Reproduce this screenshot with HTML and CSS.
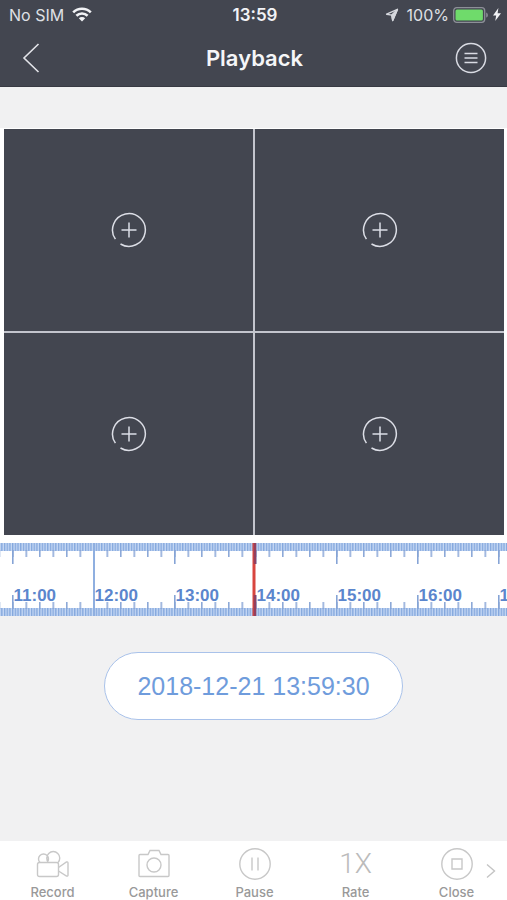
FILE: index.html
```html
<!DOCTYPE html>
<html lang="en">
<head>
  <meta charset="UTF-8">
  <meta name="viewport" content="width=device-width, initial-scale=1.0">
  <title>Playback</title>
  <link rel="stylesheet" href="styles.css">
</head>
<body>
  <header class="header">
    <div class="status-bar">
      <div class="status-left">
        <span>No SIM</span>
        <svg width="20" height="15" viewBox="0 0 20 15" fill="none" stroke="#f2f3f6" stroke-width="2.6">
          <path d="M1.2 5.4a12.6 12.6 0 0 1 17.6 0"/>
          <path d="M4.4 8.8a8 8 0 0 1 11.2 0"/>
          <path d="M6.8 11.2a4.6 4.6 0 0 1 6.4 0L10 14.4z" fill="#f2f3f6" stroke="none"/>
        </svg>
      </div>
      <span class="clock">13:59</span>
      <div class="status-right">
        <svg width="14" height="14" viewBox="0 0 14 14" fill="none" stroke="#d5d7dd" stroke-width="1.4" stroke-linejoin="round">
          <path d="M12.4 1.4L1.6 6.2l5.2.9.9 5.4z"/>
          <path d="M12.4 1.4L6.8 7.1l.9 5.4z" fill="#d5d7dd"/>
        </svg>
        <span>100%</span>
        <svg width="36" height="16" viewBox="0 0 36 16">
          <rect x=".7" y=".7" width="31" height="14.6" rx="3" fill="none" stroke="#8d9098" stroke-width="1.3"/>
          <rect x="2.5" y="2.5" width="27.4" height="11" rx="1.5" fill="#6fdb6b"/>
          <path d="M33.2 5.4c2.2.7 2.2 4.5 0 5.2z" fill="#8d9098"/>
        </svg>
        <svg width="8" height="13" viewBox="0 0 8 13"><path d="M5.4 0L0 7.4h3.2L2.2 13 8 5.2H4.6z" fill="#f2f3f6"/></svg>
      </div>
    </div>
    <div class="nav-bar">
      <button class="nav-button" aria-label="Back">
        <svg width="18" height="30" viewBox="0 0 18 30" fill="none" stroke="#e3e4e9" stroke-width="1.6"><path d="M16.5 1L2 15l14.5 14"/></svg>
      </button>
      <h1>Playback</h1>
      <button class="nav-button" aria-label="Menu">
        <svg width="32" height="32" viewBox="0 0 32 32" fill="none" stroke="#d9dbe3" stroke-width="1.5">
          <circle cx="16" cy="16" r="14.6"/>
          <path d="M9.5 11.5h13M9.5 16h13M9.5 20.5h13"/>
        </svg>
      </button>
    </div>
  </header>

  <main class="content">
    <section class="player">
      <div class="video-grid">
        <button class="video-cell" aria-label="Add camera 1"><svg class="add-icon" viewBox="-18 -18 36 36"><path d="M-8.5 14A16.4 16.4 0 1 0-13.6 9.2M-7.5 0h15M0-7.5v15"/></svg></button>
        <button class="video-cell" aria-label="Add camera 2"><svg class="add-icon" viewBox="-18 -18 36 36"><path d="M-8.5 14A16.4 16.4 0 1 0-13.6 9.2M-7.5 0h15M0-7.5v15"/></svg></button>
        <button class="video-cell" aria-label="Add camera 3"><svg class="add-icon" viewBox="-18 -18 36 36"><path d="M-8.5 14A16.4 16.4 0 1 0-13.6 9.2M-7.5 0h15M0-7.5v15"/></svg></button>
        <button class="video-cell" aria-label="Add camera 4"><svg class="add-icon" viewBox="-18 -18 36 36"><path d="M-8.5 14A16.4 16.4 0 1 0-13.6 9.2M-7.5 0h15M0-7.5v15"/></svg></button>
      </div>
      <!-- one hour is 81 units wide, x = 0 is the current time -->
      <svg class="timeline">
        <defs>
          <pattern id="minutes" x="1.5" width="2.7" height="73" patternUnits="userSpaceOnUse">
            <path d="M.7 0v8M.7 65v8" stroke="#7fa4dc" stroke-width="1.3"/>
          </pattern>
          <pattern id="tens" x="1.5" width="13.5" height="73" patternUnits="userSpaceOnUse">
            <path d="M.8 7v7M.8 59v7" stroke="#86a4d6" stroke-width="1.5"/>
          </pattern>
          <pattern id="hours" x="1.5" width="81" height="73" patternUnits="userSpaceOnUse">
            <path d="M.8 7v14M.8 52v14" stroke="#86a4d6" stroke-width="1.6"/>
          </pattern>
        </defs>
        <svg x="50%" overflow="visible">
          <rect class="band" x="-1000" y="0" width="2000" height="8"/>
          <rect class="band" x="-1000" y="65" width="2000" height="8"/>
          <rect x="-1000" width="2000" height="73" fill="url(#minutes)"/>
          <rect x="-1000" width="2000" height="73" fill="url(#tens)"/>
          <rect x="-1000" width="2000" height="73" fill="url(#hours)"/>
          <path d="M-159.5 0v73" stroke="#8fafe0" stroke-width="2"/>
          <g class="hour-labels">
            <text x="-240" y="58">11:00</text>
            <text x="-159" y="58">12:00</text>
            <text x="-78" y="58">13:00</text>
            <text x="3" y="58">14:00</text>
            <text x="84" y="58">15:00</text>
            <text x="165" y="58">16:00</text>
            <text x="246" y="58">17:00</text>
          </g>
          <path d="M.5 0v73" stroke="#d8453f" stroke-width="3"/>
          <path d="M1.5 0v21M1.5 52v21" stroke="#93405f" stroke-width="2.5"/>
        </svg>
      </svg>
    </section>
    <button class="date-button">2018-12-21 13:59:30</button>
  </main>

  <footer class="toolbar">
    <button class="tool">
      <svg class="tool-icon" viewBox="0 0 34 34">
        <path d="M3.500 15.500h17q2 0 2 2v10q0 2-2 2h-17q-2 0-2-2v-10q0-2 2-2z"/>
        <path d="M22.500 20.500l8-5.500q1.500-.5 1.500 1v12q0 1.500-1.500 1l-8-5"/>
        <path d="M4 15.500a5 5 0 1 1 7 0M12.500 15.500a6.500 6.500 0 1 1 9.500 0"/>
      </svg>
      Record
    </button>
    <button class="tool">
      <svg class="tool-icon" viewBox="0 0 34 34">
        <path d="M3 7.500h8l2-4h9l2 4h7q1 0 1 1v20q0 1-1 1H3q-1 0-1-1v-20q0-1 1-1z"/>
        <circle cx="17" cy="18" r="7"/>
      </svg>
      Capture
    </button>
    <button class="tool">
      <svg class="tool-icon" viewBox="0 0 34 34"><circle cx="17" cy="17" r="15.200"/><path d="M14 10.500v13M20 10.500v13"/></svg>
      Pause
    </button>
    <button class="tool">
      <span class="rate-value">1X</span>
      Rate
    </button>
    <button class="tool">
      <svg class="tool-icon" viewBox="0 0 34 34"><circle cx="17" cy="17" r="15.200"/><path d="M12 12h10v10H12z"/></svg>
      Close
    </button>
    <button class="more" aria-label="More tools">
      <svg width="10" height="16" viewBox="0 0 10 16" fill="none" stroke="#c4c4c4" stroke-width="1.4"><path d="M1 1.500L8.500 8 1 14.500"/></svg>
    </button>
  </footer>
</body>
</html>
```

FILE: styles.css
```css
* {
  box-sizing: border-box;
}
body {
  display: flex;
  flex-direction: column;
  min-height: 100vh;
  margin: 0;
  background-color: #f1f1f2;
  font-family: Inter, "Liberation Sans", sans-serif;
}
button {
  padding: 0;
  border: none;
  background: none;
  font-family: inherit;
  cursor: pointer;
}
svg {
  display: block;
}
.header {
  background-color: #434650;
  color: #f5f6f8;
  border-bottom: 1px solid #383a43;
}
.status-bar {
  display: grid;
  grid-template-columns: 1fr auto 1fr;
  align-items: center;
  height: 29px;
  padding: 0 6px 0 9px;
  font-size: 16px;
  color: #dfe0e5;
}
.status-left, .status-right {
  display: flex;
  align-items: center;
  gap: 8px;
}
.status-right {
  justify-content: flex-end;
  gap: 4px;
}
.status-right span {
  margin-left: 4px;
}
.clock {
  font-size: 17px;
  font-weight: 600;
  color: #f2f3f6;
}
.nav-bar {
  display: flex;
  align-items: center;
  justify-content: space-between;
  height: 57px;
  padding: 0 20px 0 22px;
}
.nav-button {
  display: flex;
  width: 32px;
}
h1 {
  margin: 0;
  font-size: 22px;
  font-weight: 600;
}
.content {
  flex: 1;
  padding-top: 41px;
}
.player {
  padding-top: 1px;
  background-color: #fff;
}
.video-grid {
  display: grid;
  grid-template-columns: 1fr 1fr;
  gap: 2px;
  margin: 0 3px 8px 4px;
  background-color: #c3c5cd;
}
.video-cell {
  display: flex;
  align-items: center;
  justify-content: center;
  aspect-ratio: 249 / 202;
  background-color: #434650;
}
.add-icon {
  width: 36px;
  height: 36px;
  fill: none;
  stroke: #dcdee6;
  stroke-width: 1.5;
}
.timeline {
  width: 100%;
  height: 73px;
}
.band {
  fill: #c6d8f4;
}
.hour-labels {
  font-family: "Liberation Sans", Arial, sans-serif;
  font-size: 17px;
  font-weight: bold;
  fill: #5b86cd;
}
.date-button {
  display: block;
  height: 68px;
  margin: 36px auto 0;
  padding: 0 32px;
  border: 1px solid #a9c2ea;
  border-radius: 34px;
  background-color: #fff;
  color: #6f9cdc;
  font-family: "Liberation Sans", Arial, sans-serif;
  font-size: 25px;
}
.toolbar {
  position: relative;
  display: flex;
  height: 59px;
  padding-left: 2px;
  background-color: #fff;
}
.tool {
  flex: 1;
  display: flex;
  flex-direction: column;
  align-items: center;
  padding-top: 6px;
  color: #999;
  font-size: 13px;
  font-weight: 500;
  line-height: 16px;
}
.tool-icon {
  flex-shrink: 0;
  width: 34px;
  height: 34px;
  margin-bottom: 3px;
  fill: none;
  stroke: #c8c8c8;
  stroke-width: 1.4;
}
.rate-value {
  height: 34px;
  margin-bottom: 3px;
  color: #bbb;
  font-family: Roboto, sans-serif;
  font-size: 28px;
  font-weight: 300;
  line-height: 34px;
}
.more {
  position: absolute;
  top: 22px;
  right: 11px;
}
```
